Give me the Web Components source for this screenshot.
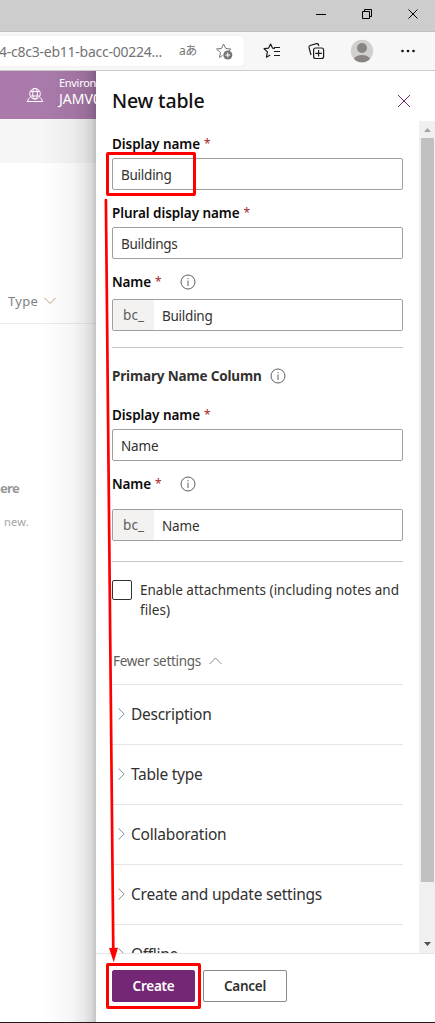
<!DOCTYPE html>
<html lang="en">
<head>
<meta charset="utf-8">
<title>New table</title>
<style>
body{margin:0;width:435px;height:1023px;overflow:hidden;background:#fff;font-family:"Noto Sans","Open Sans",sans-serif}
</style>
</head>
<body>
<app-window></app-window>
<script>
const define = (name, html, setup) => customElements.define(name, class extends HTMLElement {
  connectedCallback() {
    if (this.shadowRoot) return;
    const t = document.createElement('template');
    t.innerHTML = html;
    this.attachShadow({mode: 'open'}).append(t.content.cloneNode(true));
    if (setup) setup(this, this.shadowRoot);
  }
});

/* One line of text with tracking adjusted to a given advance width. */
define('ui-text', `<style>:host{display:inline-block;white-space:pre;flex:none}span{display:inline-block}</style><span><slot></slot></span>`, (el, root) => {
  const w = +el.getAttribute('w');
  const span = root.querySelector('span');
  const n = el.textContent.length;
  if (w && n) span.style.letterSpacing = ((w - span.getBoundingClientRect().width) / n) + 'px';
});

define('info-icon', `<style>:host{display:block;width:16px;height:16px;flex:none}svg{display:block}</style>
<svg width="16" height="16" viewBox="0 0 16 16"><circle cx="8" cy="8" r="7" fill="none" stroke="#605e5c"/><path d="M8 6.5V12M8 4V5.2" stroke="#605e5c"/></svg>`);

define('title-bar', `<style>:host{display:flex;height:31px;background:#cdcdcd;border-bottom:1px solid #bfbfbf;justify-content:flex-end;align-items:flex-start;flex:none}svg{display:block}</style>
<svg width="138" height="31" fill="none" stroke="#000"><path d="M19 14.500h10"/><path d="M65.500 11.500h7v7h-7zM67.500 11.500v-2h7v7h-2M111.500 9.500l9 9M120.500 9.500l-9 9"/></svg>`);

define('browser-bar', `<style>
:host{display:flex;height:38px;background:#f7f7f7;border-bottom:1px solid #cbcbcb;align-items:center;flex:none}
.addr{width:244px;height:30px;background:#fff;border-radius:0 4px 4px 0;box-shadow:0 0 2px #e6e6e6;display:flex;align-items:center;color:#737373;font-size:14px;overflow:hidden}
.tr{margin-left:17px;font:12px "Noto Sans","Noto Sans CJK JP",sans-serif;color:#737373;width:19px;white-space:nowrap;line-height:14px;padding-bottom:1px}
.star{margin-left:16px}.tools{flex:1}svg{display:block;flex:none}</style>
<div class="addr"><ui-text w="163" style="margin-left:-1px">4-c8c3-eb11-bacc-00224...</ui-text><span class="tr"><ui-text w="18">aあ</ui-text></span>
<svg class="star" width="20" height="20" viewBox="0 0 20 20"><path d="M5.500 16.500l1-5-4-3.500 5-.5L9.500 3l2.300 4.500 5 .6-2 2M5.500 16.500l3-2" fill="none" stroke="#737373" stroke-linejoin="round"/><circle cx="13.800" cy="14" r="4.500" fill="#737373"/><path d="M13.800 11.500v5M11.300 14h5" stroke="#fff"/></svg></div>
<svg width="191" height="38" viewBox="244 32 191 38" fill="none" stroke="#1b1b1b" stroke-width="1.200"><path d="M275 48.500l-2.500-.4-1.900-4-2 4-4.500.6 3.300 3.200-1 5.300 3.800-2.200M274 47.500h6M274 51.500h6M274 55.500h6" stroke-linejoin="round"/><path d="M311 55l-2-7.500q-.3-1.300 1-2l6.500-1.800q1.500-.3 2 1l.3 1.300"/><rect x="313.600" y="48" width="10" height="10.500" rx="2" fill="#f7f7f7"/><path d="M318.600 50v6.500M315.300 53.300h6.600"/>
<g stroke="none"><circle cx="362" cy="51" r="11.200" fill="#d2d0ce"/><circle cx="362" cy="48" r="5" fill="#8a8582"/><path d="M354 59a8.500 6 0 0 1 16 0 11.200 11.200 0 0 1-16 0" fill="#8a8582"/><g fill="#111"><circle cx="402.500" cy="51" r="1.300"/><circle cx="408" cy="51" r="1.300"/><circle cx="413.500" cy="51" r="1.300"/></g></g></svg>`);

define('page-behind', `<style>
:host{display:block;width:96px;flex:none;overflow:hidden;background:linear-gradient(90deg,transparent 40px,rgba(0,0,0,.012) 52px,rgba(0,0,0,.04) 72px,rgba(0,0,0,.085) 84px,rgba(0,0,0,.14) 91px,rgba(0,0,0,.23) 96px),linear-gradient(#a97aaa 0 48px,#f6f6f6 48px 92px,#fff 92px)}
.head{height:48px;display:flex;align-items:flex-start;color:#fff}.head svg{margin:16px 0 0 26px;flex:none}.env{margin:4px 0 0 15px;line-height:16px}.env ui-text{display:block}
.type{height:45px;margin-top:160px;box-sizing:border-box;border-bottom:1px solid rgba(0,0,0,.07);display:flex;align-items:center;padding:0 0 1px 8px;font-size:13px;color:#808080;gap:6px}
.here{margin-top:155px;font-size:13px;font-weight:700;line-height:18px;color:#999;height:18px}
.new{font-size:11px;line-height:16px;margin:17px 0 0 4px;color:#a5a5a5}
</style>
<div class="head"><svg width="18" height="17" viewBox="0 0 18 17" fill="none" stroke="#fff"><circle cx="9" cy="6.800" r="5.300"/><ellipse cx="9" cy="6.800" rx="2.300" ry="5.300"/><path d="M4.500 4.500h9M4.500 9h9M3.500 10.500L1.200 14.500h15.600L14.500 10.500"/></svg>
<div class="env"><ui-text w="37" style="font-size:11px">Environ</ui-text><ui-text w="42" style="font-size:14px">JAMV0</ui-text></div></div>
<div class="type"><ui-text w="30">Type</ui-text><svg width="12" height="8" fill="none" stroke="#b99c83"><path d="M.5 1l5.500 5.500L11.500 1"/></svg></div>
<div class="here"><ui-text w="19">ere</ui-text></div>
<div class="new"><ui-text w="25">new.</ui-text></div>`);

define('field-label', `<style>:host{display:flex;height:20px;align-items:center;font-size:13.500px;font-weight:600;color:#0b0b0b;line-height:20px}
i{font-style:normal;font-weight:400;font-size:12px;width:7px;color:#a4262c;margin-left:4px}info-icon{margin-left:18px}</style>
<slot></slot><i>*</i>`, (el, root) => { if (el.hasAttribute('info')) root.append(document.createElement('info-icon')); });

define('text-field', `<style>:host{display:flex;height:32px;box-sizing:border-box;border:1px solid #a19f9d;border-radius:2px;font-size:13.500px;color:#323130;align-items:center}
.p{width:41px;height:30px;background:#f3f2f1;color:#605e5c;display:flex;align-items:center;padding-left:10px;box-sizing:border-box}.v{padding:2px 0 0 8px}</style>
<div class="v"><slot></slot></div>`, (el, root) => {
  if (el.hasAttribute('prefix')) {
    const p = document.createElement('div'); p.className = 'p';
    p.innerHTML = '<ui-text w="21">' + el.getAttribute('prefix') + '</ui-text>';
    root.insertBefore(p, root.querySelector('.v'));
  }
});

define('expand-row', `<style>:host{display:flex;height:60px;box-sizing:border-box;border-top:1px solid #e6e6e6;align-items:center;gap:6px;padding:0 0 2px 6px;font-size:15.500px;color:#323130}svg{flex:none}</style>
<svg width="7" height="12" fill="none" stroke="#8291a3"><path d="M.6.500L6.200 6 .6 11.500"/></svg><slot></slot>`);

define('scroll-bar', `<style>:host{display:flex;flex-direction:column;width:16px;background:#f0f0f0;flex:none}div{width:13px;height:744px;background:#c1c1c1;margin-left:2px}svg{display:block;flex:none}</style>
<svg width="16" height="17"><path d="M5 11l3.500-4L12 11z" fill="#a3a3a3"/></svg><div></div><svg width="16" height="71"><path d="M5 60l3.500 4L12 60z" fill="#505050"/></svg>`);

define('push-button', `<style>:host{display:flex;width:84px;height:32px;box-sizing:border-box;border:1px solid #8a8886;border-radius:2px;align-items:center;justify-content:center;font-size:13.500px;font-weight:600;color:#323130}
:host([primary]){background:#742774;border-color:#742774;color:#fff;width:83px}</style><slot></slot>`);

define('side-panel', `<style>
:host{display:flex;flex-direction:column;flex:1;background:#fff;min-width:0}
header{height:50px;flex:none;display:flex;justify-content:space-between;align-items:center;padding:0 24px 0 16px;font-size:19.500px;font-weight:550;color:#111;box-sizing:border-box}
header ui-text{padding-top:9px}header svg{margin-top:10px}
main{display:flex;height:832px;flex:none;overflow:hidden}
.form{flex:1;padding:13px 16px 0;min-width:0}
.form>text-field{margin-top:4px}.form>field-label~field-label{margin-top:13px}
hr{border:0;border-top:1px solid #c8c6c4;margin:16px 0 0}
.sec{display:flex;gap:8px;align-items:center;margin-top:18px;height:20px;font-size:13.500px;font-weight:700;color:#323130}
.check{display:flex;gap:8px;margin-top:18px;font-size:13.500px;line-height:20px;color:#323130}.box{width:20px;height:20px;box-sizing:border-box;border:1px solid #323130;border-radius:2px;flex:none}.check ui-text{display:block}
.few{display:flex;align-items:center;gap:8px;height:20px;margin:31px 0 13px 1px;font-size:13.500px;color:#605e5c}
footer{border-top:1px solid #e6e6e6;flex:1;display:flex;gap:8px;padding:16px 16px 0}
</style>
<header><ui-text w="92.5">New table</ui-text><svg width="14" height="14" fill="none" stroke="#742774"><path d="M1 1l12 12M13 1L1 13"/></svg></header>
<main><div class="form">
<field-label><ui-text w="88">Display name</ui-text></field-label>
<text-field><ui-text w="50.5">Building</ui-text></text-field>
<field-label><ui-text w="127.5">Plural display name</ui-text></field-label>
<text-field><ui-text w="56.5">Buildings</ui-text></text-field>
<field-label info><ui-text w="39">Name</ui-text></field-label>
<text-field prefix="bc_" style="margin-top:7px"><ui-text w="50.5">Building</ui-text></text-field>
<hr>
<div class="sec"><ui-text w="149.5">Primary Name Column</ui-text><info-icon></info-icon></div>
<field-label style="margin-top:19px"><ui-text w="88">Display name</ui-text></field-label>
<text-field><ui-text w="37.5">Name</ui-text></text-field>
<field-label info><ui-text w="39">Name</ui-text></field-label>
<text-field prefix="bc_" style="margin-top:15px"><ui-text w="37.5">Name</ui-text></text-field>
<hr style="margin-top:20px">
<div class="check"><span class="box"></span><div><ui-text w="259">Enable attachments (including notes and</ui-text><ui-text w="30">files)</ui-text></div></div>
<div class="few"><ui-text w="88">Fewer settings</ui-text><svg width="13" height="8" fill="none" stroke="#8a8886"><path d="M.5 7l6-6 6 6"/></svg></div>
<expand-row><ui-text w="80.5">Description</ui-text></expand-row>
<expand-row><ui-text w="71.5">Table type</ui-text></expand-row>
<expand-row><ui-text w="95.5">Collaboration</ui-text></expand-row>
<expand-row><ui-text w="191">Create and update settings</ui-text></expand-row>
<expand-row><ui-text w="47">Offline</ui-text></expand-row>
</div><scroll-bar></scroll-bar></main>
<footer><push-button primary><ui-text w="42">Create</ui-text></push-button><push-button><ui-text w="42">Cancel</ui-text></push-button></footer>`);

/* Red call-out boxes and the arrow joining them. */
define('callout-marks', `<style>:host{position:absolute;inset:0;pointer-events:none}svg{display:block}</style>
<svg width="435" height="1023" fill="none" stroke="#f00" stroke-width="3"><rect x="107.500" y="153.500" width="87" height="41" rx=".5"/><rect x="107.500" y="964.500" width="92" height="43" rx=".5"/><path d="M105.900 200L113.300 950" stroke-width="2.700" stroke-linecap="round"/><path d="M109 948l9-.2-4.300 14.500z" fill="#f00" stroke="none"/></svg>`);

define('app-window', `<style>:host{display:flex;flex-direction:column;position:relative;width:435px;height:1023px;box-sizing:border-box;border-bottom:1px solid #1b1b1b;overflow:hidden}.body{display:flex;flex:1;min-height:0}</style>
<title-bar></title-bar><browser-bar></browser-bar><div class="body"><page-behind></page-behind><side-panel></side-panel></div><callout-marks></callout-marks>`);
</script>
</body>
</html>
